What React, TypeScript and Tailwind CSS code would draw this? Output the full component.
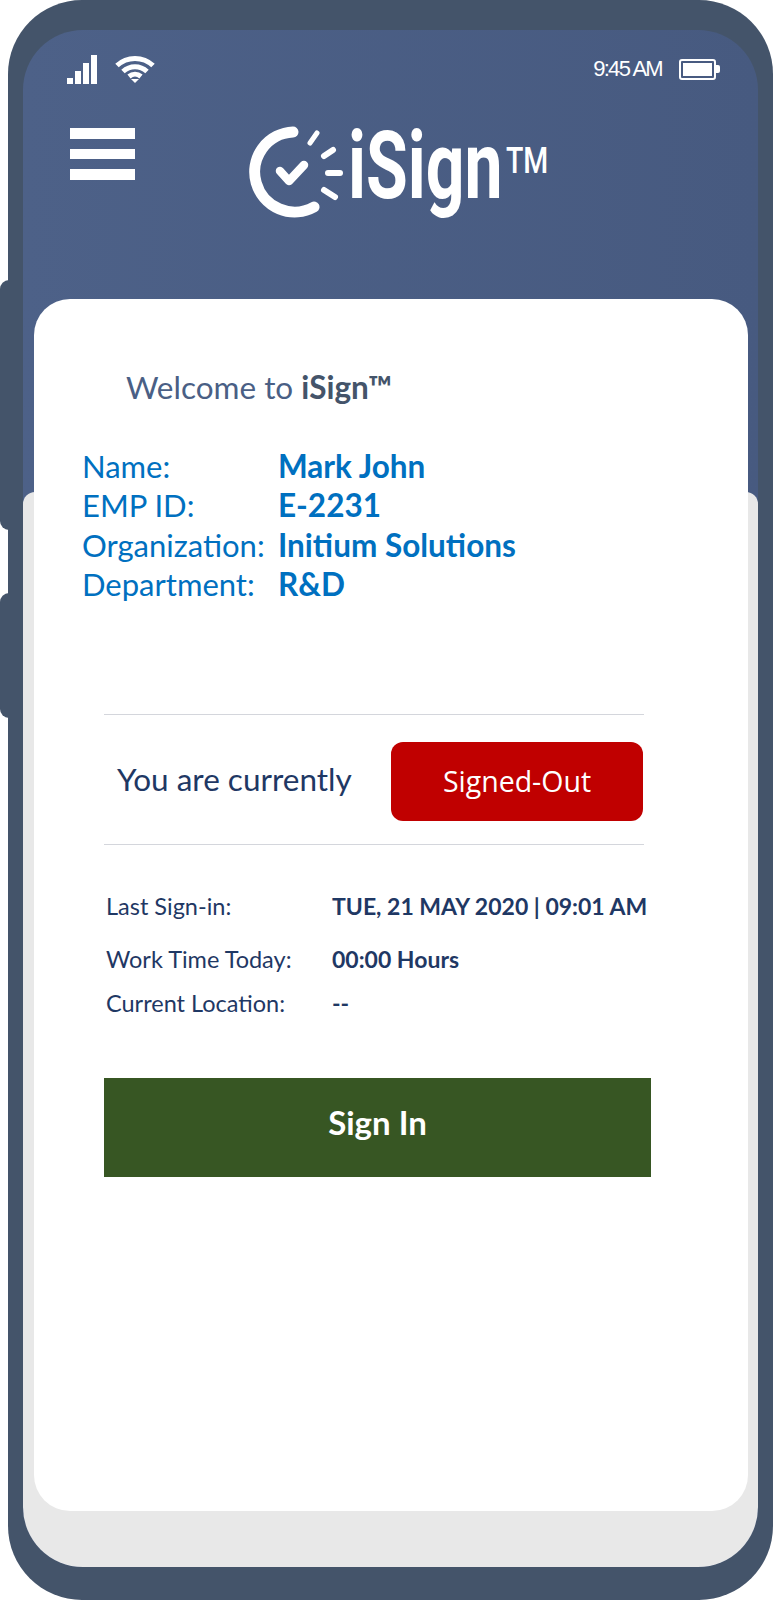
const body = "font-['Lato',sans-serif]";

function SignalIcon() {
  return (
    <div className="flex items-end gap-[2px] h-[30px] w-[31px]">
      <div className="w-[6px] h-[6px] bg-white" />
      <div className="w-[6px] h-[13px] bg-white" />
      <div className="w-[6px] h-[21px] bg-white" />
      <div className="w-[6px] h-[29px] bg-white" />
    </div>
  );
}

function WifiIcon() {
  return (
    <svg width="40" height="28" viewBox="0 0 40 28" fill="none" stroke="white" strokeWidth="5">
      <path d="M2 10.5C12 1 28 1 38 10.5" />
      <path d="M8 16.5C15 10 25 10 32 16.5" />
      <path d="M14 21.5C17.5 18.6 22.5 18.6 26 21.5" />
      <path d="M16 24L20 28L24 24Z" fill="white" stroke="none" />
    </svg>
  );
}

function BatteryIcon() {
  return (
    <div className="flex items-center">
      <div className="w-[37px] h-[21px] border-[2.5px] border-white rounded-[3px] p-[2px]">
        <div className="w-full h-full bg-white" />
      </div>
      <div className="w-[4px] h-[8px] bg-white rounded-r-[2px]" />
    </div>
  );
}

function Logo() {
  return (
    <svg width="330" height="120" viewBox="0 0 330 120" fill="none" stroke="white" strokeLinecap="round">
      <path d="M63 22A40 40 0 1 0 84 97" strokeWidth="11" />
      <path d="M50 61L59 71L74 55" strokeWidth="8.5" strokeLinejoin="round" />
      <path d="M80 33L87 23" strokeWidth="5" />
      <path d="M94 46L103 40" strokeWidth="6" />
      <path d="M98 63L110 63" strokeWidth="6" />
      <path d="M94 80L105 87" strokeWidth="6" />
      <text transform="translate(118 88) scale(0.715 1)" fill="white" stroke="none" fontFamily="Roboto, sans-serif" fontWeight="700" fontSize="95">iSign</text>
      <text transform="translate(276 63) scale(0.77 1)" fill="white" stroke="none" fontFamily="Roboto, sans-serif" fontWeight="500" fontSize="37">TM</text>
    </svg>
  );
}

const profile = [
  ["Name:", "Mark John"],
  ["EMP ID:", "E-2231"],
  ["Organization:", "Initium Solutions"],
  ["Department:", "R&D"],
];

const details = [
  ["Last Sign-in:", "TUE, 21 MAY 2020 | 09:01 AM", "h-[60px]"],
  ["Work Time Today:", "00:00 Hours", "h-[46px]"],
  ["Current Location:", "--", "h-[42px]"],
];

export default function App() {
  return (
    <div className={`relative w-[773px] h-[1600px] bg-white ${body}`}>
      {/* side buttons */}
      <div className="absolute left-0 top-[280px] w-[12px] h-[250px] rounded-l-[9px] bg-[#44546a]" />
      <div className="absolute left-0 top-[593px] w-[12px] h-[125px] rounded-l-[9px] bg-[#44546a]" />

      <div className="relative ml-[8px] w-[765px] h-[1600px] rounded-[74px] bg-[#44546a] pt-[30px] px-[15px]">
        <div className="relative w-[735px] h-[1537px] rounded-[60px] overflow-hidden bg-linear-to-r from-[#4d6188] to-[#475a80]">
          <div className="absolute inset-x-0 bottom-0 top-[462px] rounded-t-[12px] bg-[#e8e8e8]" />

          <div className="relative h-[269px] pt-[24px]">
            <div className="flex items-center justify-between pl-[44px] pr-[38px] h-[30px]">
              <div className="flex items-center gap-[17px]">
                <SignalIcon />
                <WifiIcon />
              </div>
              <div className="flex items-center gap-[17px]">
                <span className="font-['Liberation_Sans',sans-serif] text-[22px] leading-[30px] tracking-[-1.7px] text-white">9:45 AM</span>
                <BatteryIcon />
              </div>
            </div>
            <div className="flex items-start pl-[47px] mt-[26px]">
              <div className="flex flex-col gap-[10px] mt-[18px] w-[65px]">
                <div className="h-[10.5px] bg-white" />
                <div className="h-[10.5px] bg-white" />
                <div className="h-[10.5px] bg-white" />
              </div>
              <div className="ml-[95px]">
                <Logo />
              </div>
            </div>
          </div>

          <div className="relative ml-[11px] w-[714px] h-[1212px] rounded-[36px] bg-white pt-[68px]">
            <p className="pl-[92px] text-[31.5px] leading-[40px] text-[#4a5f85]">
              Welcome to <b className="font-bold text-[#44546a]">iSign™</b>
            </p>
            <div className="mt-[40px] pl-[48px]">
              {profile.map(([label, value]) => (
                <div key={label} className="flex text-[31px] leading-[39.4px] text-[#0070c0]">
                  <span className="w-[196px]">{label}</span>
                  <span className="text-[31.5px] font-bold">{value}</span>
                </div>
              ))}
            </div>

            <div className="ml-[70px] w-[540px] mt-[109px] border-y-[1.5px] border-[#d4d6dc] h-[131px] flex items-center justify-between pl-[13px] pr-[1px]">
              <span className="text-[31.5px] text-[#1f3864]">You are currently</span>
              <span className="mt-[5px] w-[252px] h-[79px] rounded-[12px] bg-[#c00000] flex items-center justify-center font-['Open_Sans',sans-serif] text-[28.5px] text-white">Signed-Out</span>
            </div>

            <div className="mt-[32px] ml-[72px]">
              {details.map(([label, value, height]) => (
                <div key={label} className={`flex items-center text-[#1f3864] text-[23px] ${height}`}>
                  <span className="w-[226px] text-[23.5px]">{label}</span>
                  <span className="font-bold whitespace-nowrap">{value}</span>
                </div>
              ))}
            </div>

            <button className="block ml-[70px] mt-[53px] w-[547px] h-[99px] pb-[8px] bg-[#375623] text-white text-[33px] font-bold">Sign In</button>
          </div>
        </div>
      </div>
    </div>
  );
}
